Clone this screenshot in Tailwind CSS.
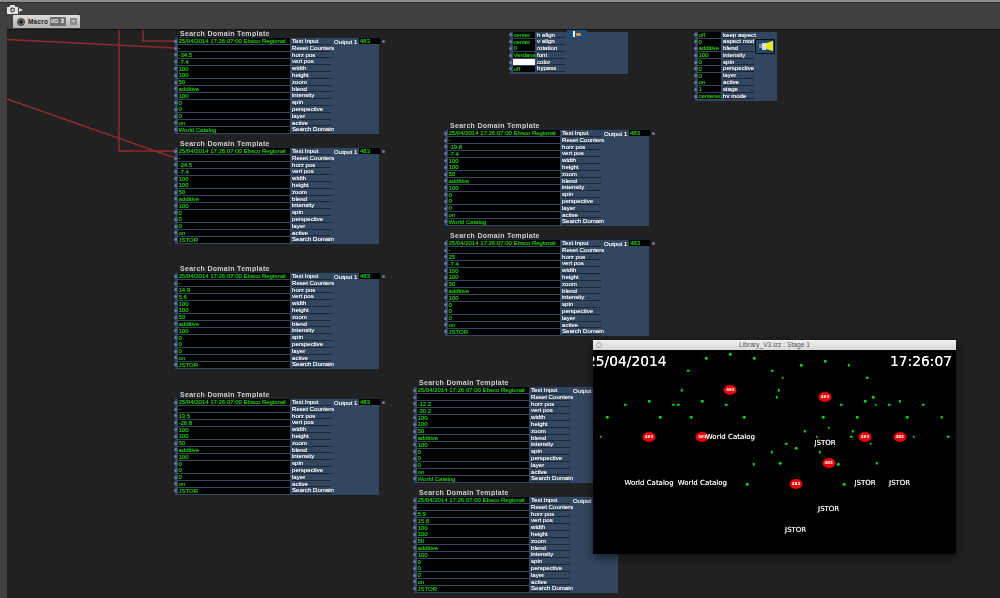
<!DOCTYPE html>
<html lang="en">
<head>
    <meta charset="UTF-8">
    <title>Library_V3.izz</title>
    <script src="https://cdn.jsdelivr.net/npm/@tailwindcss/browser@4"></script>
</head>
<body class="bg-[#212121]">
    <div class="relative w-[1000px] h-[598px] overflow-hidden bg-[#404042] font-['Liberation_Sans',sans-serif]">
        <!-- toolbar -->
        <div class="h-[3px] bg-[#8c8c8c] border-b border-[#2a2a2a]"></div>
        <div class="flex items-center gap-[1px] pl-[7px] pt-[1px] h-[12px]">
            <svg width="11" height="9" viewBox="0 0 11 9">
                <path d="M0 2h2.5l1-2h4l1 2H11v7H0z" fill="#e4e4e4"/>
                <circle cx="5.5" cy="5" r="2.4" fill="#47474a"/>
                <circle cx="5.5" cy="5" r="1.2" fill="#e4e4e4"/>
            </svg>
            <svg width="4" height="4" viewBox="0 0 4 4"><path d="M0 0l4 2-4 2z" fill="#ddd"/></svg>
        </div>
        <div class="flex items-center ml-[13px] w-[67px] h-[13px] pl-[4px] rounded-t-[1px] bg-gradient-to-b from-[#dcdcdc] to-[#b4b4b4]">
            <svg width="8" height="8" viewBox="0 0 8 8">
                <circle cx="4" cy="4" r="3.5" fill="#777" stroke="#222" stroke-width="0.8"/>
                <circle cx="4" cy="4" r="1.8" fill="#111"/>
            </svg>
            <span class="ml-[3px] w-[19px] text-[6.5px] font-bold text-[#222] tracking-[0.2px]">Macro</span>
            <span class="ml-[3px] w-[16px] h-[9px] leading-[9px] text-center text-[5.5px] font-bold text-[#eee] bg-[#6e6e6e] rounded-[1px]">I/O ⇕</span>
            <span class="ml-[4px] w-[7px] h-[7px] leading-[7px] text-center text-[6px] text-[#eee] bg-[#8e8e8e]">×</span>
        </div>

        <!-- patcher canvas -->
        <div id="canvas" class="absolute left-[7px] top-[29px] right-0 bottom-0 overflow-hidden bg-[#212121] border-t border-[#111] blur-[0.3px]">
            <svg class="absolute left-0 top-0" width="993" height="568" viewBox="7 30 993 568" fill="none" stroke="#8f2a2c" stroke-width="1.5">
                <path d="M143 29V41H175"/>
                <path d="M119 29V151H175"/>
                <path d="M7 39.5L175 48"/>
                <path d="M7 99L175 158"/>
            </svg>
        </div>

        <!-- stage window -->
        <div class="absolute left-[593px] top-[340px] w-[363px] h-[214px] bg-black shadow-[0_3px_10px_rgba(0,0,0,0.6)] overflow-hidden">
            <div class="relative h-[10px] bg-gradient-to-b from-[#f0f0f0] to-[#d8d8d8] text-center text-[6.7px] leading-[10px] text-[#555]">
                <span class="absolute left-[3px] top-[2px] w-[6px] h-[6px] rounded-full border border-[#aaa]"></span>
                Library_V3.izz : Stage 1
            </div>
            <div id="stage" class="relative h-[204px] blur-[0.25px] font-['DejaVu_Sans',sans-serif]">
                <div class="absolute left-[-6px] top-[3px] text-[13.8px] leading-[16px] text-white [text-shadow:0_0_0.6px_white] whitespace-nowrap">25/04/2014</div>
                <div class="absolute right-[4px] top-[3px] text-[13.8px] leading-[16px] text-white [text-shadow:0_0_0.6px_white] whitespace-nowrap">17:26:07</div>
            </div>
        </div>
    </div>

    <script>
        const canvas = document.getElementById('canvas');
        const stage = document.getElementById('stage');

        const labels = ['Text Input', 'Reset Counters', 'horz pos', 'vert pos', 'width', 'height', 'zoom', 'blend', 'intensity', 'spin', 'perspective', 'layer', 'active', 'Search Domain'];

        // left, panel top, horz, vert, domain
        const templates = [
            [175, 37, '-34.5', '-7.4', 'World Catalog'],
            [175, 147, '-34.5', '-7.4', 'JSTOR'],
            [175, 272, '14.9', '5.6', 'JSTOR'],
            [175, 398, '13.5', '-26.8', 'JSTOR'],
            [445, 129, '-19.8', '-7.4', 'World Catalog'],
            [445, 239, '25', '-7.4', 'JSTOR'],
            [414, 386, '-12.2', '-30.2', 'World Catalog'],
            [414, 496, '5.9', '15.8', 'JSTOR'],
        ];

        function row(value, label, boxClass, swatch) {
            return `<div class="flex items-center h-[6.8px]">
                <span class="w-[3px] h-[3px] -ml-[1.5px] mr-[1.5px] rounded-full bg-[#7373a8] shrink-0"></span>
                <span class="${boxClass} h-[6px] leading-[6px] ${swatch ? 'bg-white' : 'bg-black'} text-[#1fc00f] text-[6px] [text-shadow:0_0_0.8px_#1fc00f] whitespace-nowrap overflow-hidden pl-[0.5px] shrink-0">${value}</span>
                <span class="ml-[2px] h-[6.8px] leading-[6px] border-b border-[#1c2735] text-[#eeeeee] text-[6.1px] [text-shadow:0_0_0.5px_#eeeeee] whitespace-nowrap">${label}</span>
            </div>`;
        }

        function addNode(left, top, html) {
            const el = document.createElement('div');
            el.className = 'absolute';
            el.style.left = (left - 7) + 'px';
            el.style.top = (top - 30) + 'px';
            el.innerHTML = html;
            canvas.appendChild(el);
        }

        templates.forEach(([left, top, horz, vert, domain]) => {
            const values = ['25/04/2014 17:26:07:00 Ebsco Regional', '-', horz, vert, '100', '100', '50', 'additive', '100', '0', '0', '0', 'on', domain];
            addNode(left, top, `
                <div class="absolute left-[5px] top-[-7px] text-[7px] leading-[7px] font-bold text-[#cfcfcf] whitespace-nowrap tracking-[0.3px]">Search Domain Template</div>
                <div class="relative flex w-[204px] h-[97px] bg-[#33465f] border-t border-[#1b2635]">
                    <div class="w-[156px] [&>div>span:nth-child(3)]:w-[39px]">
                        ${values.map((v, i) => row(v, labels[i], 'w-[112px]')).join('')}
                    </div>
                    <div class="flex items-center h-[6.8px] ml-[3px]">
                        <span class="w-[25px] text-[#eeeeee] text-[6.1px] [text-shadow:0_0_0.5px_#eeeeee] whitespace-nowrap">Output 1</span>
                        <span class="w-[21px] h-[6px] leading-[6px] bg-black text-[#1fc00f] text-[6px] [text-shadow:0_0_0.8px_#1fc00f] pl-[1px]">483</span>
                        <span class="w-[3px] h-[3px] ml-[2px] rounded-full bg-[#7373a8]"></span>
                    </div>
                </div>`);
        });

        // text draw actor, top is cut by the canvas edge
        const textRows = [['center', 'h align'], ['center', 'v align'], ['0', 'rotation'], ['Verdana', 'font'], ['', 'color'], ['off', 'bypass']];
        addNode(510, 31.5, `
            <div class="relative w-[118px] h-[42.5px] bg-[#33465f]">
                <div class="w-[55px] [&>div>span:nth-child(3)]:w-[29px]">${textRows.map(r => row(r[0], r[1], 'w-[22px]', r[1] === 'color')).join('')}</div>
                <div class="absolute left-[57px] top-[-2px] flex items-center justify-center gap-[1px] w-[20px] h-[9px] bg-[#1f4d78] rounded-b-[1px]">
                    <span class="w-[2px] h-[6px] bg-white"></span>
                    <span class="w-[5px] h-[3px] bg-[#e8903a] rounded-[1px]"></span>
                </div>
            </div>`);

        // picture player actor with the yellow projector icon
        const playerRows = [['off', 'keep aspect'], ['0', 'aspect mod'], ['additive', 'blend'], ['100', 'intensity'], ['0', 'spin'], ['0', 'perspective'], ['0', 'layer'], ['on', 'active'], ['1', 'stage'], ['centered', 'hv mode']];
        addNode(695, 31.5, `
            <div class="relative w-[82px] h-[69.5px] bg-[#33465f]">
                <div class="w-[60px] [&>div>span:nth-child(3)]:w-[31px]">${playerRows.map(r => row(r[0], r[1], 'w-[23px]')).join('')}</div>
                <div class="absolute left-[60px] top-[7px] flex items-center w-[20px] h-[15px] pl-[3px] bg-[#1d4a70] border border-[#0a0a0a] rounded-[1px]">
                    <span class="w-[3px] h-[4px] bg-[#888]"></span>
                    <span class="w-[4px] h-[7px] bg-[#dcdcdc]"></span>
                    <span class="w-[7px] h-[10px] bg-[#ecec18] [clip-path:polygon(0_20%,100%_0,100%_100%,0_80%)]"></span>
                </div>
            </div>`);

        // stage content, in zoomed coordinates (3x, from 590,335)
        const dots = [[349,69],[421,58],[492,69],[294,107],[547,107],[633,90],[705,79],[776,90],[578,128],[831,128],[275,165],[566,165],[560,187],[850,187],[105,209],[177,198],[249,209],[265,209],[337,198],[409,209],[754,209],[826,198],[857,209],[897,209],[929,198],[1000,209],[51,246],[211,246],[304,246],[463,246],[699,246],[802,246],[952,246],[1055,246],[716,278],[644,288],[788,288],[32,305],[680,305],[784,305],[971,305],[1075,305],[589,326],[842,326],[618,340],[545,351],[689,351],[491,388],[570,385],[744,388],[860,385],[472,447],[763,447]];
        const blobs = [[421,166],[705,187],[177,305],[337,305],[825,305],[929,305],[716,385],[618,447]];
        const names = [['World Catalog',421,305],['JSTOR',705,325],['World Catalog',177,444],['World Catalog',337,444],['JSTOR',825,444],['JSTOR',929,444],['JSTOR',716,523],['JSTOR',617,586]];

        function place(el, zx, zy) {
            el.style.left = (590 + zx / 3 - 593) + 'px';
            el.style.top = (335 + zy / 3 - 350) + 'px';
            stage.appendChild(el);
        }

        dots.forEach(([x, y]) => {
            const d = document.createElement('div');
            d.className = 'absolute w-[2.5px] h-[2.5px] -translate-x-1/2 -translate-y-1/2 bg-[#0fd80f] rounded-full';
            place(d, x, y);
        });
        blobs.forEach(([x, y]) => {
            const b = document.createElement('div');
            b.className = 'absolute w-[13px] h-[10px] -translate-x-1/2 -translate-y-1/2 rounded-[50%] bg-[#e8050a] text-white text-[4px] leading-[10px] text-center font-bold';
            b.textContent = '483';
            place(b, x, y);
        });
        names.forEach(([name, x, y]) => {
            const n = document.createElement('div');
            n.className = 'absolute -translate-x-1/2 -translate-y-1/2 text-[7px] leading-[8px] text-[#eeeeee] [text-shadow:0_0_0.5px_#eeeeee] whitespace-nowrap';
            n.textContent = name;
            place(n, x, y);
        });
    </script>
</body>
</html>
